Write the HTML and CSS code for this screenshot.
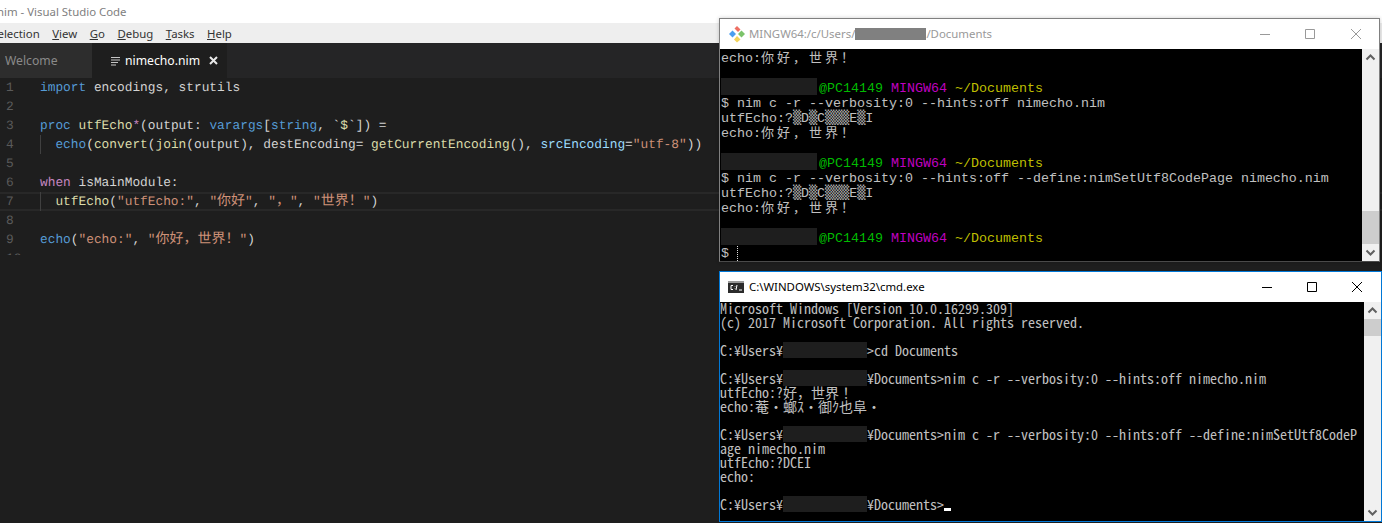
FILE: index.html
```html
<!DOCTYPE html>
<html lang="en">

<head>
    <meta charset="UTF-8">
    <meta name="viewport" content="width=device-width, initial-scale=1.0">
    <title>nimecho.nim - Visual Studio Code</title>
    <link rel="stylesheet" href="styles.css">
</head>

<body>
    <div class="vscode">
        <div class="titlebar">nim - Visual Studio Code</div>
        <div class="menubar">
            <span class="menu menu-cut">election</span>
            <span class="menu"><u>V</u>iew</span>
            <span class="menu"><u>G</u>o</span>
            <span class="menu"><u>D</u>ebug</span>
            <span class="menu"><u>T</u>asks</span>
            <span class="menu"><u>H</u>elp</span>
        </div>
        <div class="tabs">
            <div class="tab">Welcome</div>
            <div class="tab tab-active">
                <svg class="file-icon" width="10" height="10" viewBox="0 0 10 10">
                    <path d="M0 1.5H9M0 4H9M0 6.5H7M0 9H5" stroke="#c5c5c5" stroke-width="1.2" />
                </svg>
                <span class="tab-name">nimecho.nim</span>
                <svg class="tab-close" width="9" height="9" viewBox="0 0 9 9">
                    <path d="M1 1L8 8M8 1L1 8" stroke="#e8e8e8" stroke-width="2" />
                </svg>
            </div>
        </div>
        <div class="editor">
            <div class="line"><span class="num">1</span><span class="code"><span class="kw">import</span> encodings, strutils</span></div>
            <div class="line"><span class="num">2</span><span class="code"></span></div>
            <div class="line"><span class="num">3</span><span class="code"><span class="kw">proc</span> <span class="fn">utfEcho</span><span class="op">*</span>(output: <span class="kw">varargs</span>[<span class="kw">string</span>, `<span class="fn">$</span>`]) =</span></div>
            <div class="line"><span class="num">4</span><span class="code"><span class="indent"></span><span class="kw">echo</span>(<span class="fn">convert</span>(<span class="fn">join</span>(output), destEncoding= <span class="fn">getCurrentEncoding</span>(), <span class="var">srcEncoding</span>=<span class="str">"utf-8"</span>))</span></div>
            <div class="line"><span class="num">5</span><span class="code"></span></div>
            <div class="line"><span class="num">6</span><span class="code"><span class="ctl">when</span> isMainModule:</span></div>
            <div class="line line-current"><span class="num">7</span><span class="code"><span class="indent"></span><span class="fn">utfEcho</span>(<span class="str">"utfEcho:"</span>, <span class="str">"<span class="cjk">你好</span>"</span>, <span class="str">"<span class="cjk">，</span>"</span>, <span class="str">"<span class="cjk">世界！</span>"</span>)</span></div>
            <div class="line"><span class="num">8</span><span class="code"></span></div>
            <div class="line"><span class="num">9</span><span class="code"><span class="kw">echo</span>(<span class="str">"echo:"</span>, <span class="str">"<span class="cjk">你好，世界！</span>"</span>)</span></div>
            <div class="line"><span class="num">10</span><span class="code"></span></div>
        </div>
    </div>

    <div class="window window-git">
        <div class="win-title">
            <svg class="win-icon" width="18" height="18" viewBox="0 0 18 18">
                <path d="M4.5 5.5L8 9L4.5 12.5L1 9Z" fill="#4a9df0" />
                <path d="M9 1L12.5 4.5L10 7L6.5 3.5Z" fill="#ee6f63" />
                <path d="M13.5 5.5L17 9L13.5 12.5L10 9Z" fill="#7cc36a" />
                <path d="M9 11L12.5 14.5L9 17.5L6 14.5Z" fill="#f3d35a" />
            </svg>
            <span class="win-name">MINGW64:/c/Users/<span class="title-redact"></span>/Documents</span>
            <div class="win-buttons">
                <svg width="10" height="10" viewBox="0 0 10 10"><path d="M0 5.5H10" stroke="#999" /></svg>
                <svg width="10" height="10" viewBox="0 0 10 10"><path d="M.5 .5H9.5V9.5H.5Z" stroke="#999" fill="none" /></svg>
                <svg width="10" height="10" viewBox="0 0 10 10"><path d="M0 0L10 10M10 0L0 10" stroke="#999" /></svg>
            </div>
        </div>
        <div class="win-body">
<pre class="term term-git">echo:<span class="wide">你好，世界！</span>

<span class="redact"></span><span class="c-green">@PC14149 </span><span class="c-purple">MINGW64 </span><span class="c-yellow">~/Documents</span>
$ nim c -r --verbosity:0 --hints:off nimecho.nim
utfEcho:?<span class="shade">▒</span>D<span class="shade">▒</span>C<span class="shade">▒▒▒</span>E<span class="shade">▒</span>I
echo:<span class="wide">你好，世界！</span>

<span class="redact"></span><span class="c-green">@PC14149 </span><span class="c-purple">MINGW64 </span><span class="c-yellow">~/Documents</span>
$ nim c -r --verbosity:0 --hints:off --define:nimSetUtf8CodePage nimecho.nim
utfEcho:?<span class="shade">▒</span>D<span class="shade">▒</span>C<span class="shade">▒▒▒</span>E<span class="shade">▒</span>I
echo:<span class="wide">你好，世界！</span>

<span class="redact"></span><span class="c-green">@PC14149 </span><span class="c-purple">MINGW64 </span><span class="c-yellow">~/Documents</span>
$ <span class="caret"></span></pre>
            <div class="scrollbar">
                <svg class="arrow" width="17" height="17" viewBox="0 0 17 17"><path d="M4.5 10.5L8.5 6.5L12.5 10.5" stroke="#606060" stroke-width="2" fill="none" /></svg>
                <div class="track"><div class="thumb thumb-git"></div></div>
                <svg class="arrow" width="17" height="17" viewBox="0 0 17 17"><path d="M4.5 6.5L8.5 10.5L12.5 6.5" stroke="#606060" stroke-width="2" fill="none" /></svg>
            </div>
        </div>
    </div>

    <div class="window window-cmd">
        <div class="win-title">
            <svg class="win-icon" width="16" height="12" viewBox="0 0 16 12">
                <rect width="16" height="12" fill="#2b2b2b" />
                <rect y="0" width="16" height="2" fill="#9a9a9a" />
                <path d="M5 4.5H3V8.5H5M7 5V5.5M7 7.5V8M9 4L8 9M11 9H14" stroke="#fff" fill="none" />
            </svg>
            <span class="win-name">C:\WINDOWS\system32\cmd.exe</span>
            <div class="win-buttons">
                <svg width="10" height="10" viewBox="0 0 10 10"><path d="M0 5.5H10" stroke="#000" /></svg>
                <svg width="10" height="10" viewBox="0 0 10 10"><path d="M.5 .5H9.5V9.5H.5Z" stroke="#000" fill="none" /></svg>
                <svg width="10" height="10" viewBox="0 0 10 10"><path d="M0 0L10 10M10 0L0 10" stroke="#000" /></svg>
            </div>
        </div>
        <div class="win-body">
<pre class="term term-cmd">Microsoft Windows [Version 10.0.16299.309]
(c) 2017 Microsoft Corporation. All rights reserved.

C:¥Users¥<span class="redact"></span>>cd Documents

C:¥Users¥<span class="redact"></span>¥Documents>nim c -r --verbosity:0 --hints:off nimecho.nim
utfEcho:?好，世界！
echo:菴・螂ｽ・御ｸ也阜・

C:¥Users¥<span class="redact"></span>¥Documents>nim c -r --verbosity:0 --hints:off --define:nimSetUtf8CodeP
age nimecho.nim
utfEcho:?DCEI
echo:

C:¥Users¥<span class="redact"></span>¥Documents><span class="cursor"></span></pre>
            <div class="scrollbar">
                <svg class="arrow" width="17" height="17" viewBox="0 0 17 17"><path d="M4.5 10.5L8.5 6.5L12.5 10.5" stroke="#606060" stroke-width="2" fill="none" /></svg>
                <div class="track"><div class="thumb thumb-cmd"></div></div>
                <svg class="arrow" width="17" height="17" viewBox="0 0 17 17"><path d="M4.5 6.5L8.5 10.5L12.5 6.5" stroke="#606060" stroke-width="2" fill="none" /></svg>
            </div>
        </div>
    </div>
</body>

</html>
```

FILE: styles.css
```css
html,
body {
    height: 100%;
}

body {
    margin: 0;
    overflow: hidden;
    position: relative;
    background-color: #1e1e1e;
    font-family: "Noto Sans", sans-serif;
}

/* editor */
.vscode {
    display: flex;
    flex-direction: column;
}

.titlebar {
    height: 23px;
    line-height: 24px;
    margin-left: -3px;
    font-size: 11.4px;
    color: #808080;
    background-color: #fff;
}

.menubar {
    height: 20px;
    display: flex;
    align-items: center;
    font-size: 11.4px;
    color: #333;
    background-color: #eee;
}

.menu {
    margin-left: 12.5px;
}

.menu-cut {
    margin-left: -2.5px;
}

.tabs {
    height: 35px;
    display: flex;
    background-color: #252526;
}

.tab {
    width: 92px;
    padding-left: 5px;
    box-sizing: border-box;
    line-height: 36px;
    font-size: 12.2px;
    color: #8a8a8a;
    background-color: #2d2d2d;
}

.tab-active {
    width: 135px;
    padding-left: 19px;
    display: flex;
    align-items: center;
    color: #fff;
    background-color: #1e1e1e;
}

.tab-name {
    margin-left: 4px;
}

.tab-close {
    margin-left: 9px;
}

.editor {
    height: 177px;
    overflow: hidden;
    font-family: "Liberation Mono", monospace;
    font-size: 12.83px;
    line-height: 19px;
    color: #d4d4d4;
    text-rendering: geometricPrecision;
}

.line {
    display: flex;
    height: 19px;
}

.line-current {
    box-shadow: inset 0 2px #282828, inset 0 -2px #282828;
}

.num {
    width: 40px;
    padding-left: 6px;
    box-sizing: border-box;
    color: #5a5a5a;
}

.code {
    white-space: pre;
}

.indent {
    display: inline-block;
    width: 15.4px;
    height: 19px;
    vertical-align: top;
    box-shadow: inset 1px 0 #404040;
}

.kw {
    color: #569cd6;
}

.ctl,
.op {
    color: #c586c0;
}

.fn {
    color: #dcdcaa;
}

.var {
    color: #9cdcfe;
}

.str {
    color: #ce9178;
}

.cjk {
    font-family: "Noto Sans CJK SC", sans-serif;
    font-size: 14px;
    line-height: 0;
}

/* terminal windows */
.window {
    position: absolute;
    box-sizing: border-box;
    display: flex;
    flex-direction: column;
    background-color: #000;
}

.window-git {
    left: 719px;
    top: 18px;
    width: 661px;
    height: 244px;
    border: 1px solid #808080;
    border-bottom-color: #4a4a4a;
    box-shadow: 0 0 4px rgba(0, 0, 0, 0.2);
}

.window-cmd {
    left: 719px;
    top: 271px;
    width: 663px;
    height: 251px;
    border: 1px solid #0078d7;
}

.win-title {
    height: 30px;
    flex-shrink: 0;
    display: flex;
    align-items: center;
    font-size: 11.4px;
    background-color: #fff;
}

.win-icon {
    margin-left: 8px;
    flex-shrink: 0;
}

.win-name {
    margin-top: -2px;
}

.window-git .win-name {
    margin-left: 3px;
    color: #999;
}

.window-cmd .win-name {
    margin-left: 5px;
    color: #000;
}

.title-redact {
    display: inline-block;
    width: 71px;
    height: 12px;
    vertical-align: -2px;
    background-color: #808080;
}

.win-buttons {
    margin-left: auto;
    margin-right: 18px;
    display: flex;
    gap: 35px;
}

.window-git .win-buttons svg:last-child {
    margin-left: 1px;
}

.window-cmd .win-buttons {
    margin-right: 19px;
}

.win-body {
    flex: 1;
    min-height: 0;
    display: flex;
}

.term {
    flex: 1;
    margin: 0;
    overflow: hidden;
    color: #c0c0c0;
}

.term-git {
    padding: 2px 0 0 1px;
    font-family: "Liberation Mono", monospace;
    font-size: 13.33px;
    line-height: 15px;
}

.term-cmd {
    padding-top: 0;
    margin-top: -1px;
    font-family: "Noto Sans Mono CJK JP", "Liberation Mono", monospace;
    font-size: 14px;
    line-height: 14px;
}

.wide {
    font-family: "Noto Sans CJK SC", sans-serif;
    font-size: 13px;
    line-height: 0;
    letter-spacing: 3px;
}

.shade {
    font-family: "DejaVu Sans Mono", monospace;
    line-height: 0;
    color: #b0b0b0;
}

.redact {
    display: inline-block;
    vertical-align: top;
    box-shadow: 0 -1px #1e1e1e, 0 1px #1e1e1e;
    background-color: #1e1e1e;
}

.term-git .redact {
    width: 96px;
    height: 15px;
    margin-top: -2px;
    margin-right: 2px;
}

.term-cmd .redact {
    width: 84px;
    height: 14px;
}

.c-green {
    color: #00bb00;
}

.c-purple {
    color: #bf00bf;
}

.c-yellow {
    color: #bfbf00;
}

.caret {
    display: inline-block;
    height: 15px;
    vertical-align: top;
    border-left: 1px dotted #ddd;
}

.cursor {
    display: inline-block;
    width: 7px;
    height: 3px;
    vertical-align: -1px;
    background-color: #fff;
}

.scrollbar {
    width: 17px;
    flex-shrink: 0;
    display: flex;
    flex-direction: column;
    background-color: #f0f0f0;
}

.arrow {
    flex-shrink: 0;
}

.track {
    flex: 1;
}

.thumb {
    background-color: #cdcdcd;
}

.thumb-git {
    height: 33px;
    margin-top: 145px;
}

.thumb-cmd {
    height: 17px;
}
```
